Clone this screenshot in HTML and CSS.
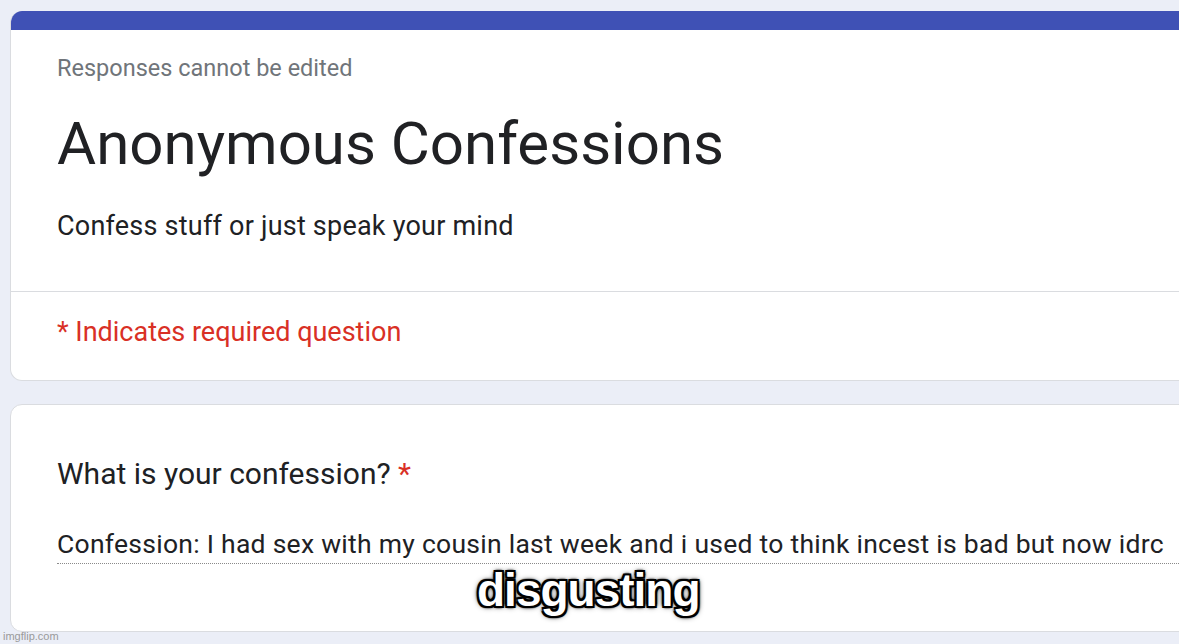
FILE: index.html
```html
<!DOCTYPE html>
<html>
<head>
<meta charset="utf-8">
<link rel="stylesheet" href="styles.css">
</head>
<body>
<div class="page">
  <div class="card header-card">
    <div class="top-bar"></div>
    <div class="header-main">
      <div class="note">Responses cannot be edited</div>
      <h1 class="title">Anonymous Confessions</h1>
      <div class="desc">Confess stuff or just speak your mind</div>
    </div>
    <div class="required-row">
      <span class="required">* Indicates required question</span>
    </div>
  </div>
  <div class="card question-card">
    <div class="question">What is your confession? <span class="star">*</span></div>
    <div class="answer">Confession: I had sex with my cousin last week and i used to think incest is bad but now idrc</div>
  </div>
</div>
<div class="caption">disgusting</div>
<div class="watermark">imgflip.com</div>
</body>
</html>
```
FILE: styles.css
```css
html, body {
  margin: 0;
  padding: 0;
}
body {
  width: 1179px;
  height: 644px;
  overflow: hidden;
  background: #ebeef7;
  font-family: Roboto, "Liberation Sans", Arial, sans-serif;
  position: relative;
}
.page {
  padding-top: 11px;
  padding-left: 10px;
  display: flex;
  flex-direction: column;
  gap: 23px;
}
.card {
  width: 1220px;
  background: #fff;
  border: 1px solid #dadce0;
  border-radius: 12px;
  box-sizing: border-box;
  overflow: hidden;
}
.header-card {
  height: 370px;
  border-top: none;
}
.top-bar {
  height: 19px;
  background: #3f51b5;
}
.header-main {
  padding: 24px 0 0 46px;
  height: 262px;
  box-sizing: border-box;
  border-bottom: 1px solid #dadce0;
}
.note {
  font-size: 23.5px;
  line-height: 28px;
  color: #70757a;
}
.title {
  margin: 26px 0 0 0;
  font-size: 60px;
  font-weight: 400;
  line-height: 72px;
  color: #202124;
}
.desc {
  margin-top: 28px;
  font-size: 27px;
  line-height: 36px;
  letter-spacing: 0.22px;
  color: #202124;
}
.required-row {
  padding: 22px 0 0 46px;
}
.required {
  font-size: 27px;
  line-height: 36px;
  color: #d93025;
}
.question-card {
  height: 228px;
  padding: 49px 0 0 46px;
}
.question {
  font-size: 30px;
  line-height: 40px;
  color: #202124;
}
.star {
  color: #d93025;
}
.answer {
  margin-top: 34px;
  font-size: 26.5px;
  line-height: 32px;
  letter-spacing: 0.27px;
  color: #202124;
  padding-bottom: 3px;
  border-bottom: 1px dotted #8a8a8a;
  white-space: nowrap;
}
.caption {
  position: absolute;
  left: 477px;
  top: 563px;
  font-family: "Liberation Sans", Arial, sans-serif;
  font-weight: bold;
  font-size: 46px;
  line-height: 54px;
  color: #fff;
  letter-spacing: -1px;
  text-shadow: -2px -2px 0 #000, 2px -2px 0 #000, -2px 2px 0 #000, 2px 2px 0 #000, 0 2px 2px #000, 0 -2px 2px #000, 2px 0 2px #000, -2px 0 2px #000, 0 0 6px #000;
}
.watermark {
  position: absolute;
  left: 3px;
  bottom: 2px;
  font-family: "Liberation Sans", Arial, sans-serif;
  font-size: 11px;
  color: #9a9a9a;
}
```
